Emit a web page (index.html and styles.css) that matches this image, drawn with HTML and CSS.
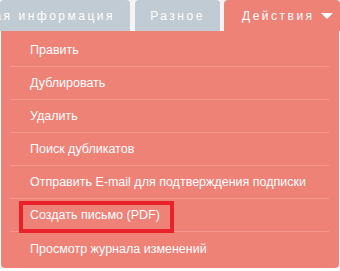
FILE: index.html
```html
<!DOCTYPE html>
<html lang="ru">
<head>
<meta charset="utf-8">
<link rel="stylesheet" href="styles.css">
</head>
<body>
<div class="tabs">
  <div class="tab tab-first">Общая информация</div>
  <div class="tab tab-misc">Разное</div>
  <div class="tab tab-active">Действия <span class="caret"></span></div>
</div>
<ul class="menu">
  <li class="item">Править</li>
  <li class="item">Дублировать</li>
  <li class="item">Удалить</li>
  <li class="item">Поиск дубликатов</li>
  <li class="item">Отправить E-mail для подтверждения подписки</li>
  <li class="item item-marked">Создать письмо (PDF)<span class="mark"></span></li>
  <li class="item item-last">Просмотр журнала изменений</li>
</ul>
</body>
</html>
```
FILE: styles.css
```css
html, body {
  margin: 0;
  padding: 0;
  background: #ffffff;
}
body {
  width: 340px;
  height: 271px;
  overflow: hidden;
  font-family: "Liberation Sans", Arial, sans-serif;
}
.tabs {
  display: flex;
  height: 31px;
  background: #f4f4f4;
  gap: 5px;
}
.tab {
  flex: none;
  box-sizing: border-box;
  height: 31px;
  border-radius: 4px 4px 0 0;
  color: #ffffff;
  font-size: 12px;
  letter-spacing: 2.5px;
  display: flex;
  align-items: center;
  justify-content: center;
  white-space: nowrap;
  overflow: hidden;
}
.tab-first {
  width: 130px;
  background: #c1cbd3;
  justify-content: flex-end;
  padding-right: 15px;
}
.tab-misc {
  width: 85px;
  background: #c1cbd3;
}
.tab-active {
  width: 116px;
  margin-left: -1px;
  background: #ef8277;
  justify-content: flex-start;
  padding-left: 18px;
}
.caret {
  display: inline-block;
  margin-left: 6px;
  width: 0;
  height: 0;
  border-left: 6.5px solid transparent;
  border-right: 6.5px solid transparent;
  border-top: 6px solid #ffffff;
}
.menu {
  list-style: none;
  margin: 0 0 0 1px;
  padding: 3px 10px 3px 9px;
  width: 338px;
  box-sizing: border-box;
  height: 237px;
  background: #ef8277;
  border-radius: 0 0 4px 4px;
}
.item {
  position: relative;
  height: 33px;
  box-sizing: border-box;
  border-bottom: 1px solid #f7978d;
  padding-left: 20px;
  display: flex;
  align-items: center;
  color: #ffffff;
  font-size: 12.5px;
  white-space: nowrap;
}
.item-last {
  border-bottom: none;
}
.mark {
  position: absolute;
  left: 9px;
  top: 2px;
  width: 155px;
  height: 32px;
  box-sizing: border-box;
  border: 4px solid #e8212b;
}
```
